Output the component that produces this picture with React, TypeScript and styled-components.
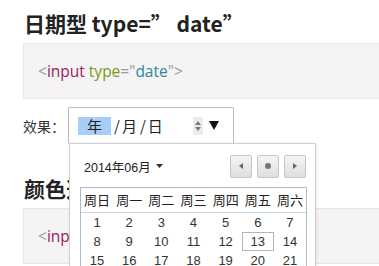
import styled, {createGlobalStyle} from "styled-components";

const GlobalStyle = createGlobalStyle`
    html, body {
        margin: 0;
        padding: 0;
        background: #fff;
        overflow: hidden;
    }
`

const CJK = `"Noto Sans CJK SC", sans-serif`;
const UI = `"Liberation Sans", Arial, "Noto Sans CJK SC", sans-serif`;

const weekDays = ["周日", "周一", "周二", "周三", "周四", "周五", "周六"];
const weeks = [
    [1, 2, 3, 4, 5, 6, 7],
    [8, 9, 10, 11, 12, 13, 14],
    [15, 16, 17, 18, 19, 20, 21],
];
const TODAY = 13;

function Code({tag, value}: {tag: string, value: string}) {
    return (
        <CodeBox>
            <Punct>&lt;</Punct>
            <Tag>{tag}</Tag>
            <Attr> type</Attr>
            <Punct>=</Punct>
            <Punct>"</Punct>
            <Value>{value}</Value>
            <Punct>"</Punct>
            <Punct>&gt;</Punct>
        </CodeBox>
    )
}

function App() {
    return (
        <Page>
            <GlobalStyle />
            <Title>日期型 type=”&nbsp;date”</Title>
            <Code tag="input" value="date" />
            <Row>
                <Label>效果：</Label>
                <Field>
                    <DateInput>
                        <Segment $active>年</Segment>
                        <Sep>/</Sep>
                        <Segment>月</Segment>
                        <Sep>/</Sep>
                        <Segment>日</Segment>
                        <Spacer />
                        <Spinner>
                            <svg width="8" height="14" viewBox="0 0 8 14">
                                <path d="M4 2 L7 6 L1 6 Z" fill="#777" />
                                <path d="M1 8 L7 8 L4 12 Z" fill="#777" />
                            </svg>
                        </Spinner>
                        <DropArrow>
                            <svg width="10" height="9" viewBox="0 0 10 9">
                                <path d="M0 0 L10 0 L5 9 Z" fill="#111" />
                            </svg>
                        </DropArrow>
                    </DateInput>
                    <Popup>
                        <PopupHead>
                            <MonthLabel>
                                2014年06月
                                <svg width="7" height="4" viewBox="0 0 7 4">
                                    <path d="M0 0 L7 0 L3.5 4 Z" fill="#333" />
                                </svg>
                            </MonthLabel>
                            <NavGroup>
                                <NavButton>
                                    <svg width="4" height="6" viewBox="0 0 4 6">
                                        <path d="M4 0 L4 6 L0 3 Z" fill="#666" />
                                    </svg>
                                </NavButton>
                                <NavButton>
                                    <svg width="6" height="6" viewBox="0 0 6 6">
                                        <circle cx="3" cy="3" r="3" fill="#777" />
                                    </svg>
                                </NavButton>
                                <NavButton>
                                    <svg width="4" height="6" viewBox="0 0 4 6">
                                        <path d="M0 0 L4 3 L0 6 Z" fill="#666" />
                                    </svg>
                                </NavButton>
                            </NavGroup>
                        </PopupHead>
                        <Calendar>
                            <WeekHead>
                                {weekDays.map(d => <HeadCell key={d}>{d}</HeadCell>)}
                            </WeekHead>
                            {weeks.map((w, i) => (
                                <Week key={i}>
                                    {w.map(d => (
                                        <Day key={d} $today={d === TODAY}>{d}</Day>
                                    ))}
                                </Week>
                            ))}
                        </Calendar>
                    </Popup>
                </Field>
            </Row>
            <Title $second>颜色选择器 type=”&nbsp;color”</Title>
            <Code tag="input" value="color" />
        </Page>
    )
}

export default App;

const Page = styled.div`
    width: 379px;
    height: 266px;
    overflow: hidden;
    padding: 9px 0 0 23px;
    box-sizing: border-box;
`

const Title = styled.h2<{$second?: boolean}>`
    margin: ${p => p.$second ? "30px 0 5px 1px" : "0 0 0 1px"};
    font-family: ${CJK};
    font-size: 21px;
    font-weight: 700;
    line-height: 28px;
    color: #222;
    white-space: nowrap;
`

const CodeBox = styled.div`
    margin-top: 6px;
    height: 54px;
    display: flex;
    align-items: center;
    padding-left: 14px;
    background: #f5f3f3;
    border: 1px solid #e8e6e6;
    border-right: none;
    font-family: "Open Sans", ${CJK};
    font-size: 15.5px;
    white-space: pre;
`

const Punct = styled.span`
    color: #999;
`

const Tag = styled.span`
    color: #99225e;
`

const Attr = styled.span`
    color: #779922;
`

const Value = styled.span`
    color: #2d88a0;
`

const Row = styled.div`
    display: flex;
    align-items: center;
    margin-top: 8px;
`

const Label = styled.span`
    width: 45px;
    font-family: ${CJK};
    font-size: 14px;
    color: #333;
`

const Field = styled.div`
    position: relative;
`

const DateInput = styled.div`
    width: 166px;
    height: 37px;
    box-sizing: border-box;
    display: flex;
    align-items: center;
    padding: 0 14px 0 9px;
    border: 1px solid #bbb;
    border-radius: 1px;
    font-family: ${CJK};
    font-size: 15px;
    color: #222;
`

const Segment = styled.span<{$active?: boolean}>`
    display: inline-block;
    padding: ${p => p.$active ? "0 9px" : "0"};
    background: ${p => p.$active ? "#a8cdf6" : "transparent"};
    line-height: 18px;
`

const Sep = styled.span`
    margin: 0 2px 0 3px;
`

const Spacer = styled.span`
    flex: 1;
`

const Spinner = styled.span`
    display: flex;
    align-items: center;
    justify-content: center;
    width: 10px;
    height: 18px;
    margin-right: 6px;
    background: #ececec;
`

const DropArrow = styled.span`
    display: flex;
`

const Popup = styled.div`
    position: absolute;
    top: 36px;
    left: 1px;
    width: 247px;
    height: 140px;
    box-sizing: border-box;
    padding: 10px 9px 0 10px;
    background: #fff;
    border: 1px solid #cfcfcf;
    box-shadow: 1px 1px 3px rgba(0, 0, 0, 0.08);
    z-index: 2;
`

const PopupHead = styled.div`
    display: flex;
    align-items: center;
    justify-content: space-between;
    height: 24px;
    margin-bottom: 9px;
`

const MonthLabel = styled.div`
    display: flex;
    align-items: center;
    gap: 5px;
    padding-left: 4px;
    font-family: ${UI};
    font-size: 12.5px;
    color: #222;
`

const NavGroup = styled.div`
    display: flex;
    gap: 5px;
`

const NavButton = styled.div`
    display: flex;
    align-items: center;
    justify-content: center;
    width: 22px;
    height: 23px;
    box-sizing: border-box;
    border: 1px solid #c6c6c6;
    border-radius: 2px;
    background: linear-gradient(#f4f4f4, #dedede);
`

const Calendar = styled.div`
    width: 227px;
    box-sizing: border-box;
    border: 1px solid #a9bbd0;
    border-bottom: none;
`

const WeekHead = styled.div`
    display: grid;
    grid-template-columns: repeat(7, 1fr);
    height: 24px;
    align-items: center;
    border-bottom: 1px solid #c9d3de;
`

const HeadCell = styled.span`
    text-align: center;
    font-family: ${CJK};
    font-size: 13px;
    line-height: 16px;
    color: #222;
`

const Week = styled.div`
    display: grid;
    grid-template-columns: repeat(7, 1fr);
    height: 19px;
    align-items: center;
`

const Day = styled.span<{$today?: boolean}>`
    justify-self: center;
    width: 32px;
    height: 19px;
    box-sizing: border-box;
    display: flex;
    align-items: center;
    justify-content: center;
    font-family: ${UI};
    font-size: 13px;
    line-height: 15px;
    color: #333;
    border: 1px solid ${p => p.$today ? "#b5b5b5" : "transparent"};
`
